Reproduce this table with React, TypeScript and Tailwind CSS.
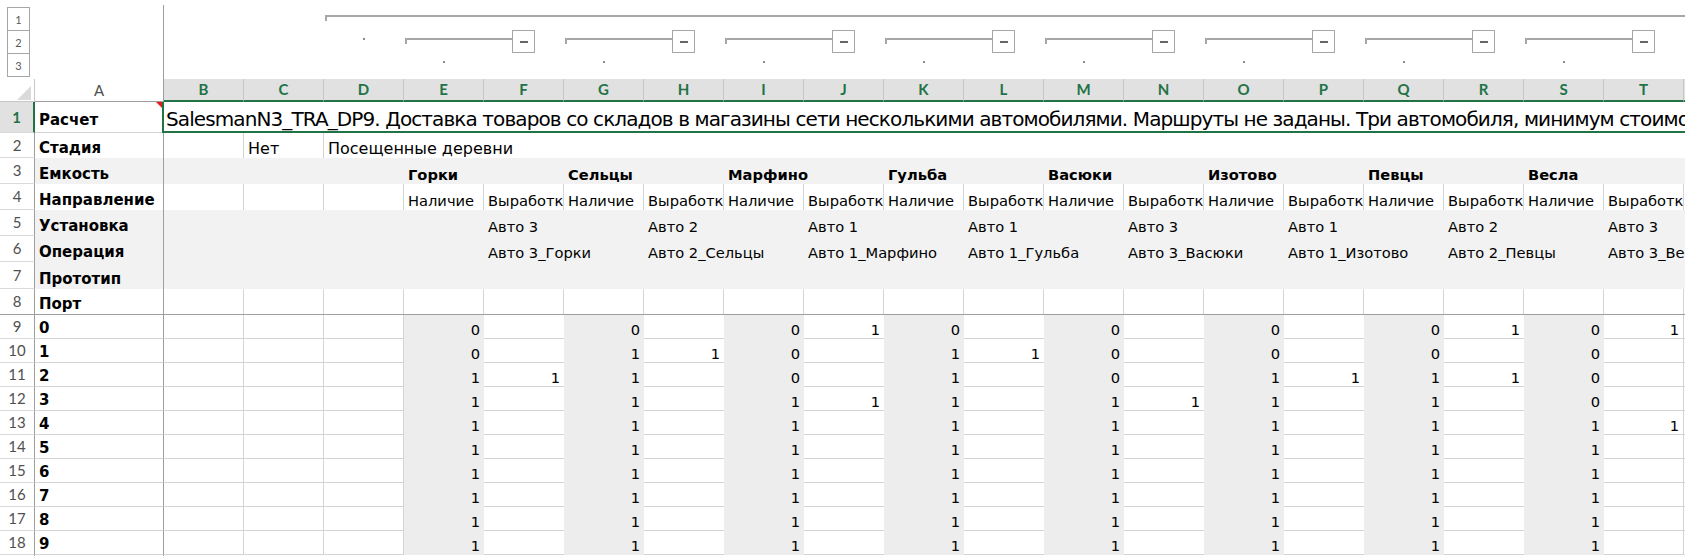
import React from 'react';

const villages = ['Горки', 'Сельцы', 'Марфино', 'Гульба', 'Васюки', 'Изотово', 'Певцы', 'Весла'];
const autos = ['Авто 3', 'Авто 2', 'Авто 1', 'Авто 1', 'Авто 3', 'Авто 1', 'Авто 2', 'Авто 3'];
const letters = 'BCDEFGHIJKLMNOPQRST'.split('');

const data: string[][] = [
  ['0', '', '0', '', '0', '1', '0', '', '0', '', '0', '', '0', '1', '0', '1'],
  ['0', '', '1', '1', '0', '', '1', '1', '0', '', '0', '', '0', '', '0', ''],
  ['1', '1', '1', '', '0', '', '1', '', '0', '', '1', '1', '1', '1', '0', ''],
  ['1', '', '1', '', '1', '1', '1', '', '1', '1', '1', '', '1', '', '0', ''],
  ['1', '', '1', '', '1', '', '1', '', '1', '', '1', '', '1', '', '1', '1'],
  ['1', '', '1', '', '1', '', '1', '', '1', '', '1', '', '1', '', '1', ''],
  ['1', '', '1', '', '1', '', '1', '', '1', '', '1', '', '1', '', '1', ''],
  ['1', '', '1', '', '1', '', '1', '', '1', '', '1', '', '1', '', '1', ''],
  ['1', '', '1', '', '1', '', '1', '', '1', '', '1', '', '1', '', '1', ''],
  ['1', '', '1', '', '1', '', '1', '', '1', '', '1', '', '1', '', '1', ''],
];

function RH({ n, bottom = true }: { n: string; bottom?: boolean }) {
  return (
    <div
      className={
        bottom
          ? "w-[35px] shrink-0 bg-white border-r border-b border-r-[#9e9e9e] border-b-[#dadada] flex items-center justify-center font-['Lato',sans-serif] text-[15px] text-[#505050]"
          : "w-[35px] shrink-0 bg-white border-r border-r-[#9e9e9e] flex items-center justify-center font-['Lato',sans-serif] text-[15px] text-[#505050]"
      }
    >
      {n}
    </div>
  );
}

function ACell({ label, bottom = false }: { label: string; bottom?: boolean }) {
  return (
    <div
      className={
        bottom
          ? 'w-[129px] shrink-0 border-r border-b border-r-[#9e9e9e] border-b-[#d4d4d4] font-bold text-[15px] flex items-end pl-[4px] pb-[1px] whitespace-nowrap'
          : 'w-[129px] shrink-0 border-r border-r-[#9e9e9e] font-bold text-[15px] flex items-end pl-[4px] pb-[1px] whitespace-nowrap'
      }
    >
      {label}
    </div>
  );
}

function Outline() {
  const groups = [0, 1, 2, 3, 4, 5, 6, 7];
  return (
    <div className="flex h-[79px]">
      <div className="w-[163px] shrink-0 pt-[7px] pl-[7px] flex flex-col">
        {['1', '2', '3'].map((n, i) => (
          <div
            key={n}
            className={
              i === 0
                ? "w-[23px] h-[24px] border border-[#a6a6a6] flex items-center justify-center font-['Lato',sans-serif] text-[11px] text-[#595959]"
                : "w-[23px] h-[24px] -mt-px border border-[#a6a6a6] flex items-center justify-center font-['Lato',sans-serif] text-[11px] text-[#595959]"
            }
          >
            {n}
          </div>
        ))}
      </div>
      <div className="w-px shrink-0 mt-[5px] bg-[#9e9e9e]" />
      <svg width="1521" height="79" className="shrink-0">
        <rect x="161" y="15" width="2" height="6" fill="#a6a6a6" />
        <rect x="161" y="15" width="1400" height="2" fill="#a6a6a6" />
        <rect x="199" y="38" width="2" height="2" fill="#8a8a8a" />
        {groups.map((k) => (
          <g key={k}>
            <rect x={241 + 160 * k} y="38" width="2" height="6" fill="#a6a6a6" />
            <rect x={241 + 160 * k} y="38" width="107" height="2" fill="#a6a6a6" />
            <rect x={348.5 + 160 * k} y="30.5" width="22" height="22" fill="white" stroke="#a6a6a6" strokeWidth="1" />
            <rect x={356 + 160 * k} y="41" width="8" height="2" fill="#666666" />
            <rect x={279 + 160 * k} y="61" width="2" height="2" fill="#8a8a8a" />
          </g>
        ))}
      </svg>
    </div>
  );
}

function HeaderRow() {
  return (
    <div className="flex h-[23px] font-['Lato',sans-serif] text-[15px]">
      <div className="w-[35px] shrink-0 bg-white border-r border-b border-[#c6c6c6] relative">
        <svg width="34" height="22" className="block">
          <polygon points="31,7 31,21 17,21" fill="#dadada" />
        </svg>
      </div>
      <div className="w-[129px] shrink-0 bg-white border-r border-r-[#9e9e9e] border-b border-b-[#9e9e9e] flex items-center justify-center text-[#505050]">
        A
      </div>
      {letters.map((l) => (
        <div
          key={l}
          className="w-[80px] shrink-0 bg-[#e1e1e1] border-r border-r-[#c6c6c6] border-b-2 border-b-[#217346] flex items-center justify-center text-[#217346] font-bold"
        >
          {l}
        </div>
      ))}
      <div className="flex-1 bg-[#e1e1e1] border-b-2 border-b-[#217346]" />
    </div>
  );
}

function Row1() {
  return (
    <div className="flex h-[31px]">
      <div className="w-[35px] shrink-0 bg-[#e1e1e1] border-r-2 border-r-[#217346] border-b border-b-[#dadada] flex items-center justify-center font-['Lato',sans-serif] text-[15px] text-[#217346] font-bold">
        1
      </div>
      <div className="w-[127px] shrink-0 border-b border-b-[#d4d4d4] font-bold text-[15px] flex items-end pl-[4px] pb-[3px] relative">
        Расчет
        <div className="absolute top-0 right-0 w-0 h-0 border-t-[6px] border-l-[6px] border-t-[#e51c1c] border-l-transparent" />
      </div>
      <div className="flex-1 min-w-0 border-l-2 border-b-2 border-[#217346] flex items-end pl-[2px] pb-0 whitespace-nowrap overflow-hidden text-[20px] leading-[24px] tracking-[-0.9px]">
        SalesmanN3_TRA_DP9. Доставка товаров со складов в магазины сети несколькими автомобилями. Маршруты не заданы. Три автомобиля, минимум стоимости
      </div>
    </div>
  );
}

function Row2() {
  return (
    <div className="flex h-[25px]">
      <RH n="2" />
      <ACell label="Стадия" />
      <div className="w-[80px] shrink-0 border-r border-[#d4d4d4]" />
      <div className="w-[80px] shrink-0 border-r border-[#d4d4d4] flex items-end pl-[4px] pb-[1px] text-[16px]">Нет</div>
      <div className="flex-1 flex items-end pl-[4px] pb-[1px] whitespace-nowrap text-[16px]">Посещенные деревни</div>
    </div>
  );
}

function Row3() {
  return (
    <div className="flex h-[26px] bg-[#f2f2f2]">
      <RH n="3" />
      <ACell label="Емкость" />
      <div className="w-[240px] shrink-0" />
      {villages.map((v) => (
        <div key={v} className="w-[160px] shrink-0 flex items-end pl-[4px] pb-[1px] font-bold whitespace-nowrap">
          {v}
        </div>
      ))}
      <div className="flex-1" />
    </div>
  );
}

function Row4() {
  return (
    <div className="flex h-[26px]">
      <RH n="4" />
      <ACell label="Направление" />
      <div className="w-[80px] shrink-0 border-r border-[#d4d4d4]" />
      <div className="w-[80px] shrink-0 border-r border-[#d4d4d4]" />
      <div className="w-[80px] shrink-0 border-r border-[#d4d4d4]" />
      {villages.map((v) => (
        <React.Fragment key={v}>
          <div className="w-[80px] shrink-0 border-r border-[#d4d4d4] flex items-end pl-[4px] pb-[1px] whitespace-nowrap overflow-hidden">
            Наличие
          </div>
          <div className="w-[80px] shrink-0 border-r border-[#d4d4d4] flex items-end pl-[4px] pb-[1px] whitespace-nowrap overflow-hidden">
            Выработка
          </div>
        </React.Fragment>
      ))}
      <div className="flex-1" />
    </div>
  );
}

function Row56({ n, label, texts }: { n: string; label: string; texts: string[] }) {
  return (
    <div className="flex h-[26px] bg-[#f2f2f2]">
      <RH n={n} />
      <ACell label={label} />
      <div className="w-[320px] shrink-0" />
      {texts.map((t, i) => (
        <React.Fragment key={i}>
          <div className="w-[80px] shrink-0 flex items-end pl-[4px] pb-[1px] whitespace-nowrap">{t}</div>
          <div className="w-[80px] shrink-0" />
        </React.Fragment>
      ))}
      <div className="flex-1" />
    </div>
  );
}

function Row7() {
  return (
    <div className="flex h-[27px] bg-[#f2f2f2]">
      <RH n="7" />
      <ACell label="Прототип" />
      <div className="flex-1" />
    </div>
  );
}

function Row8() {
  return (
    <div className="flex h-[26px] border-b border-b-[#9e9e9e]">
      <RH n="8" bottom={false} />
      <ACell label="Порт" />
      {letters.map((l) => (
        <div key={l} className="w-[80px] shrink-0 border-r border-[#d4d4d4]" />
      ))}
      <div className="flex-1" />
    </div>
  );
}

function DataRow({ n, label, vals }: { n: string; label: string; vals: string[] }) {
  return (
    <div className="flex h-[24px]">
      <RH n={n} />
      <ACell label={label} bottom />
      <div className="w-[80px] shrink-0 border-r border-b border-[#d4d4d4]" />
      <div className="w-[80px] shrink-0 border-r border-b border-[#d4d4d4]" />
      <div className="w-[80px] shrink-0 border-r border-b border-[#d4d4d4]" />
      {vals.map((v, i) =>
        i % 2 === 0 ? (
          <div key={i} className="w-[80px] shrink-0 bg-[#ededed] flex items-end justify-end pr-[4px] pb-[1px]">
            {v}
          </div>
        ) : i === 15 ? (
          <div key={i} className="w-[80px] shrink-0 border-r border-b border-[#d4d4d4] flex items-end justify-end pr-[4px] pb-0">
            {v}
          </div>
        ) : (
          <div key={i} className="w-[80px] shrink-0 border-b border-[#d4d4d4] flex items-end justify-end pr-[4px] pb-0">
            {v}
          </div>
        )
      )}
      <div className="flex-1 border-b border-[#d4d4d4]" />
    </div>
  );
}

export default function App() {
  return (
    <div className="w-[1685px] h-[556px] overflow-hidden bg-white text-black font-['DejaVu_Sans',sans-serif] text-[14.67px] leading-[17px]">
      <Outline />
      <HeaderRow />
      <Row1 />
      <Row2 />
      <Row3 />
      <Row4 />
      <Row56 n="5" label="Установка" texts={autos} />
      <Row56 n="6" label="Операция" texts={villages.map((v, i) => `${autos[i]}_${v}`)} />
      <Row7 />
      <Row8 />
      {data.map((vals, i) => (
        <DataRow key={i} n={String(9 + i)} label={String(i)} vals={vals} />
      ))}
      <div className="flex h-[10px]">
        <div className="w-[35px] shrink-0 border-r border-r-[#9e9e9e]" />
        <div className="w-[129px] shrink-0 border-r border-r-[#9e9e9e]" />
      </div>
    </div>
  );
}
